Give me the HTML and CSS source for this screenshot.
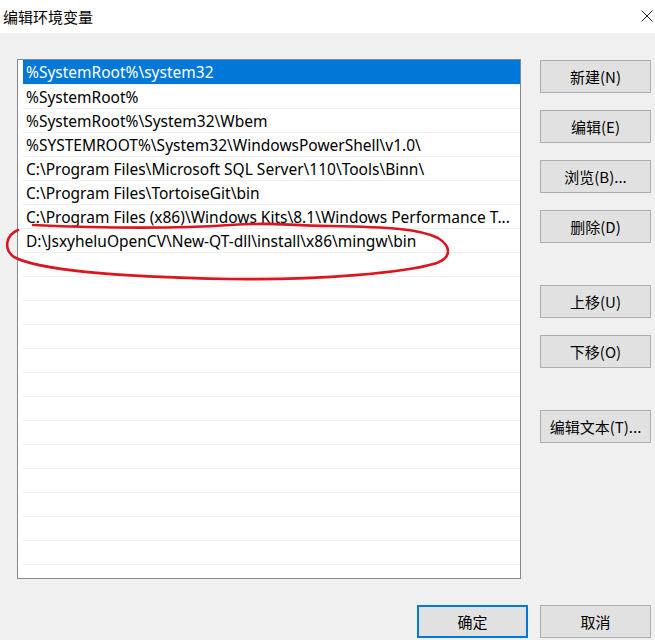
FILE: index.html
```html
<!DOCTYPE html>
<html lang="zh-CN">
<head>
  <meta charset="UTF-8" />
  <title>编辑环境变量</title>
  <link rel="stylesheet" href="styles.css">
</head>
<body>

  <div class="dialog">
    <div class="title-bar">
      <span class="title">编辑环境变量</span>
      <svg class="close" width="12" height="12" viewBox="0 0 12 12">
        <path d="M0.5 0.5 L11.5 11.5 M11.5 0.5 L0.5 11.5" stroke="#222" stroke-width="1" fill="none"/>
      </svg>
    </div>

    <div class="content">
      <div class="path-list">
        <div class="row selected">%SystemRoot%\system32</div>
        <div class="row">%SystemRoot%</div>
        <div class="row">%SystemRoot%\System32\Wbem</div>
        <div class="row">%SYSTEMROOT%\System32\WindowsPowerShell\v1.0\</div>
        <div class="row">C:\Program Files\Microsoft SQL Server\110\Tools\Binn\</div>
        <div class="row">C:\Program Files\TortoiseGit\bin</div>
        <div class="row">C:\Program Files (x86)\Windows Kits\8.1\Windows Performance T...</div>
        <div class="row">D:\JsxyheluOpenCV\New-QT-dll\install\x86\mingw\bin</div>
        <div class="row"></div>
        <div class="row"></div>
        <div class="row"></div>
        <div class="row"></div>
        <div class="row"></div>
        <div class="row"></div>
        <div class="row"></div>
        <div class="row"></div>
        <div class="row"></div>
        <div class="row"></div>
        <div class="row"></div>
        <div class="row"></div>
        <div class="row"></div>
        <div class="row"></div>
      </div>

      <div class="side-buttons">
        <button class="btn">新建(N)</button>
        <button class="btn">编辑(E)</button>
        <button class="btn">浏览(B)...</button>
        <button class="btn">删除(D)</button>
        <button class="btn group-start">上移(U)</button>
        <button class="btn">下移(O)</button>
        <button class="btn group-start">编辑文本(T)...</button>
      </div>
    </div>

    <div class="footer">
      <button class="btn btn-default">确定</button>
      <button class="btn">取消</button>
    </div>

    <!-- hand-drawn red mark around the new entry -->
    <svg class="mark" width="655" height="640" viewBox="0 0 655 640">
      <path d="M18 230 C 6 235, 3 249, 14 257 C 40 271, 120 277, 230 279 C 320 280, 405 273, 437 263 C 452 257, 451 246, 438 238 C 420 229, 390 227, 330 226 C 280 225, 270 222, 230 225 C 170 229, 100 228, 33 225"
            stroke="#dc1620" stroke-width="2.6" fill="none" stroke-linecap="round"/>
    </svg>
  </div>

</body>
</html>
```

FILE: styles.css
```css
body {
  margin: 0;
  font-family: "Noto Sans", "Noto Sans CJK SC", sans-serif;
  font-size: 15px;
  color: #000;
  background: #f0f0f0;
}

.dialog {
  position: relative;
  width: 655px;
  height: 640px;
  overflow: hidden;
}

.title-bar {
  height: 33px;
  background: white;
  display: flex;
  align-items: center;
  justify-content: space-between;
  padding: 0 2px 0 3px;
  box-sizing: border-box;
}

.title {
  font-family: "Noto Sans CJK SC", sans-serif;
  font-size: 15px;
  margin-top: -1px;
}

.close {
  margin-top: -2px;
}

.content {
  display: flex;
  padding: 26px 0 0 17px;
}

.path-list {
  width: 504px;
  height: 520px;
  box-sizing: border-box;
  border: 1px solid #828790;
  background: white;
  padding-left: 5px;
  overflow: hidden;
  font-size: 15.5px;
}

.row {
  height: 24px;
  box-sizing: border-box;
  line-height: 25px;
  padding-left: 3px;
  white-space: nowrap;
  overflow: hidden;
}

.row + .row {
  border-top: 1px solid #f0f0f0;
  line-height: 24px;
}

.row.selected {
  background: #0078d7;
  color: white;
}

.side-buttons {
  display: flex;
  flex-direction: column;
  gap: 17px;
  margin-left: 19px;
  padding-top: 1px;
}

.btn {
  width: 111px;
  height: 33px;
  background: #e1e1e1;
  border: 1px solid #adadad;
  font-family: "Noto Sans CJK SC", sans-serif;
  font-size: 15px;
  color: #000;
  padding: 0;
}

.side-buttons .group-start {
  margin-top: 25px;
}

.footer {
  display: flex;
  justify-content: flex-end;
  gap: 12px;
  padding: 26px 4px 0 0;
}

.btn-default {
  border: 2px solid #0078d7;
}

.mark {
  position: absolute;
  top: 0;
  left: 0;
  pointer-events: none;
}
```
